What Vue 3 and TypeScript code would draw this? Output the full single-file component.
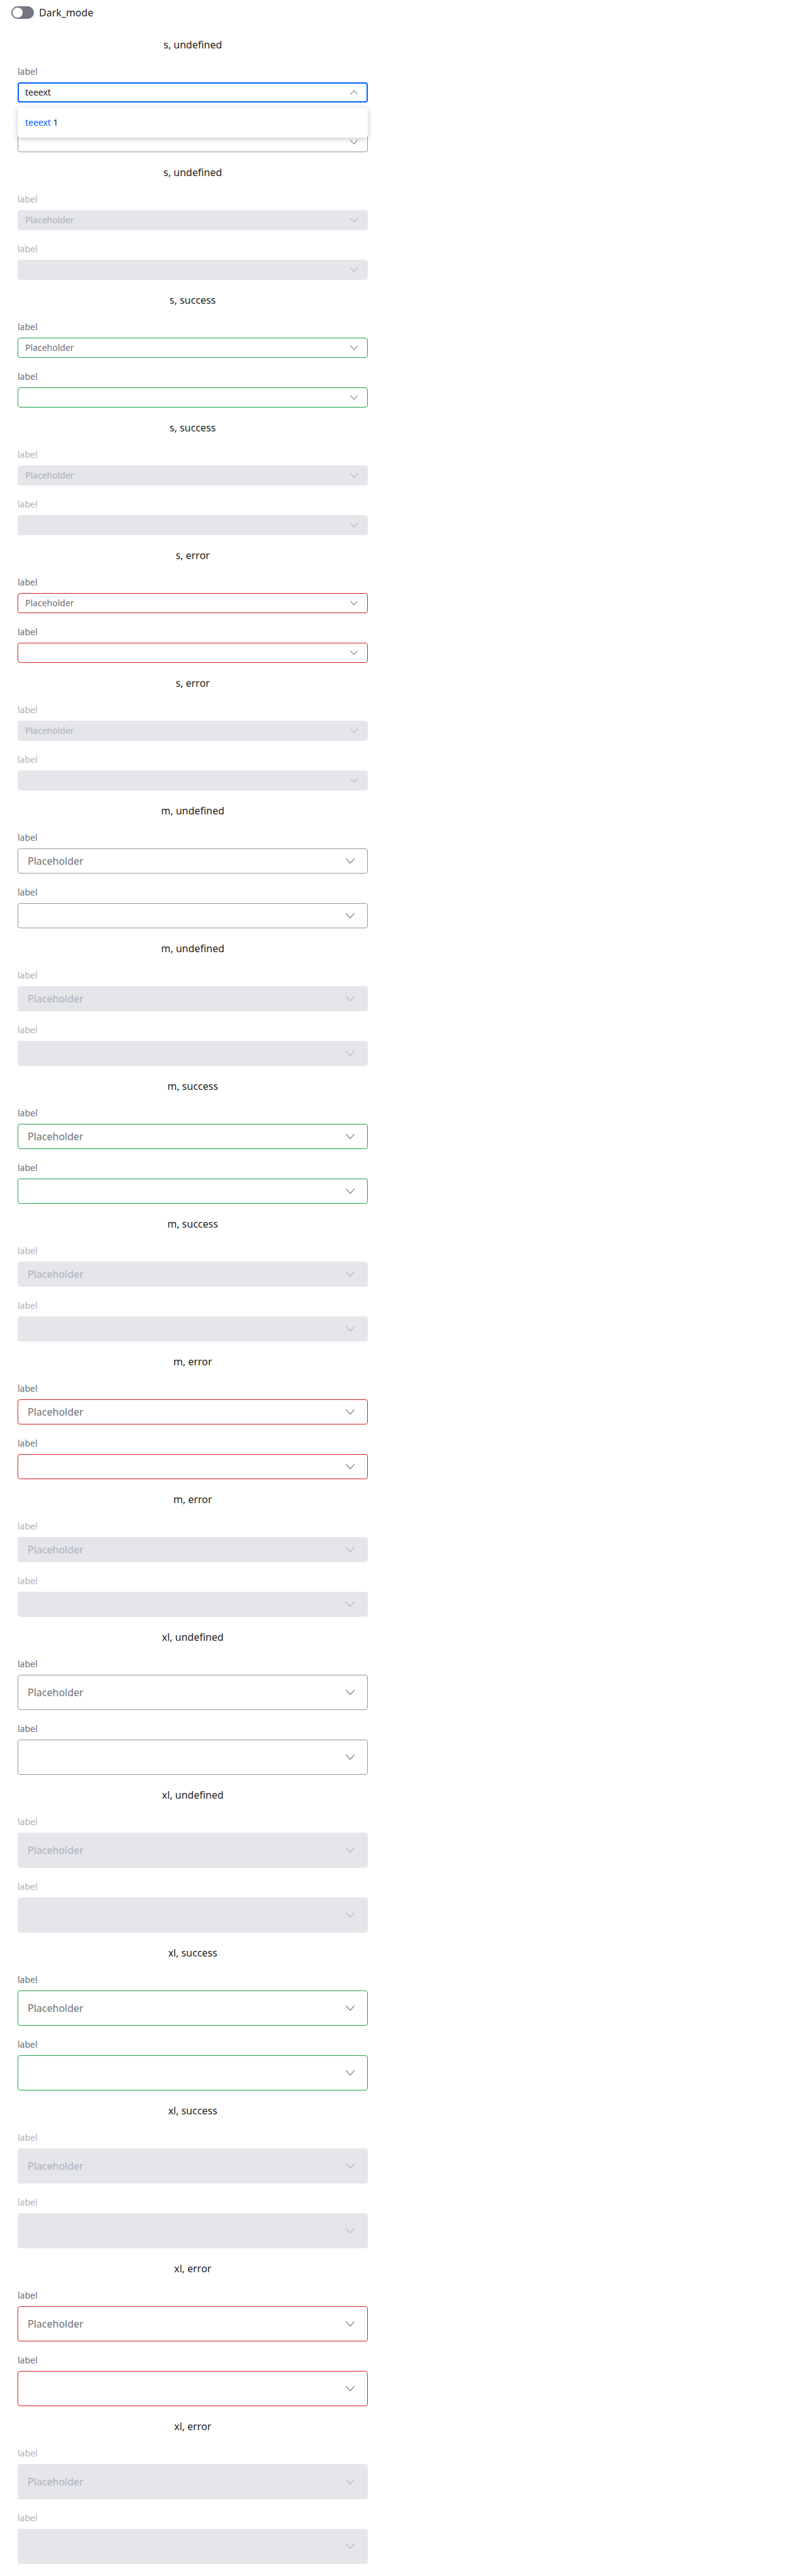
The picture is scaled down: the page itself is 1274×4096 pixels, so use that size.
<script setup lang="ts">
import { computed, ref } from 'vue'

type Size = 's' | 'm' | 'xl'
type Status = 'undefined' | 'success' | 'error'

interface Field {
  id: string
  placeholder: string
  open: boolean
}

interface Section {
  id: string
  size: Size
  status: Status
  disabled: boolean
  fields: Field[]
}

const darkMode = ref(false)
const query = ref('teeext')
const options = ['teeext 1']

const sizes: Size[] = ['s', 'm', 'xl']
const statuses: Status[] = ['undefined', 'success', 'error']

const sections: Section[] = sizes.flatMap((size) =>
  statuses.flatMap((status) =>
    [false, true].map((disabled) => {
      const id = `${size}-${status}-${disabled ? 'disabled' : 'enabled'}`
      return {
        id,
        size,
        status,
        disabled,
        fields: [
          { id: `${id}-1`, placeholder: 'Placeholder', open: id === 's-undefined-enabled' },
          { id: `${id}-2`, placeholder: '', open: false },
        ],
      }
    }),
  ),
)

const matches = computed(() =>
  options
    .filter((option) => option.startsWith(query.value))
    .map((option) => ({ hit: query.value, rest: option.slice(query.value.length) })),
)
</script>

<template>
  <main class="page" :class="{ dark: darkMode }">
    <label class="toggle">
      <input v-model="darkMode" type="checkbox" role="switch" class="switch" />
      <span>Dark_mode</span>
    </label>

    <div class="sections">
      <section
        v-for="section in sections"
        :key="section.id"
        class="section"
        :class="[section.size, section.status, { disabled: section.disabled }]"
      >
        <h2 class="title">{{ section.size }}, {{ section.status }}</h2>
        <div class="fields">
          <div
            v-for="field in section.fields"
            :key="field.id"
            class="field"
            :class="{ expanded: field.open }"
          >
            <label class="label" :for="field.id">label</label>
            <div class="control" :class="{ open: field.open }">
              <input
                v-if="field.open"
                :id="field.id"
                v-model="query"
                class="input"
                type="text"
                role="combobox"
                aria-expanded="true"
                autocomplete="off"
              />
              <input
                v-else
                :id="field.id"
                class="input"
                type="text"
                role="combobox"
                aria-expanded="false"
                autocomplete="off"
                :placeholder="field.placeholder"
                :disabled="section.disabled"
              />
              <svg class="chevron" viewBox="0 0 24 24" aria-hidden="true">
                <path d="M5.4 8.2 12 15.6l6.6-7.4" />
              </svg>
              <ul v-if="field.open" class="menu" role="listbox">
                <li v-for="match in matches" :key="match.rest" class="option" role="option">
                  <span class="hit">{{ match.hit }}</span>{{ match.rest }}
                </li>
              </ul>
            </div>
          </div>
        </div>
      </section>
    </div>
  </main>
</template>

<style>
body {
  margin: 0;
  background: #ffffff;
}
</style>

<style scoped>
.page {
  padding: 8px 18px 19px;
  background: #ffffff;
  color: #1b1d22;
  font-family: 'Noto Sans', sans-serif;
  font-size: 16px;
  line-height: 24px;
}

.page.dark {
  background: #1b1d22;
  color: #f2f3f5;
}

.toggle {
  display: flex;
  align-items: center;
  gap: 8px;
}

.switch {
  appearance: none;
  box-sizing: border-box;
  width: 36px;
  height: 20px;
  margin: 0;
  padding: 2px;
  border-radius: 10px;
  background: #737681;
}

.switch::before {
  content: '';
  display: block;
  width: 16px;
  height: 16px;
  border-radius: 50%;
  background: #ffffff;
}

.switch:checked::before {
  margin-left: auto;
}

.sections {
  display: flex;
  flex-direction: column;
  gap: 20px;
  width: 45%;
  margin: 27px 0 0 10px;
}

.section {
  display: flex;
  flex-direction: column;
  gap: 21px;
}

.title {
  margin: 0;
  font-size: 16px;
  font-weight: 400;
  line-height: 24px;
  text-align: center;
}

.fields {
  display: flex;
  flex-direction: column;
  gap: 20px;
}

.field {
  display: flex;
  flex-direction: column;
  gap: 7px;
}

.label {
  color: #6b6e79;
  font-size: 14px;
  line-height: 20px;
}

/* The open menu lies over the label of the field below it. */
.expanded + .field .label {
  visibility: hidden;
}

.control {
  position: relative;
  box-sizing: border-box;
  display: flex;
  align-items: center;
  height: 40px;
  padding: 0 15px;
  border: 1px solid #9194a1;
  border-radius: 4px;
}

.s .control {
  height: 32px;
  padding: 0 11px;
}

.xl .control {
  height: 56px;
}

.success .control {
  border-color: #1fa04f;
}

.error .control {
  border-color: #d92020;
}

.s .control.open {
  padding: 0 10px;
  border: 2px solid #0062ff;
}

.input {
  flex: 1;
  min-width: 0;
  padding: 0;
  border: 0;
  outline: 0;
  background: transparent;
  color: inherit;
  font: inherit;
}

.s .input {
  font-size: 14px;
  line-height: 20px;
}

.input::placeholder {
  color: #6e6f74;
  opacity: 1;
}

.chevron {
  flex: none;
  width: 24px;
  height: 24px;
  fill: none;
  stroke: #737681;
  stroke-width: 1.25;
}

.s .chevron {
  width: 20px;
  height: 20px;
}

.open .chevron {
  transform: rotate(180deg);
}

.disabled .label,
.disabled .input::placeholder {
  color: #acafb8;
}

.disabled .control {
  border-color: #e5e6ea;
  background: #e5e6ea;
}

.disabled .chevron {
  stroke: #b0b3bd;
}

.menu {
  position: absolute;
  z-index: 1;
  top: calc(100% + 10px);
  right: -2px;
  left: -2px;
  margin: 0;
  padding: 8px 0;
  border-radius: 4px;
  background: #ffffff;
  box-shadow: 0 2px 8px rgba(0, 0, 0, 0.24);
  list-style: none;
}

.option {
  padding: 6px 12px;
  color: #1b1d22;
  font-size: 14px;
  line-height: 20px;
}

.hit {
  color: #0062ff;
}
</style>
